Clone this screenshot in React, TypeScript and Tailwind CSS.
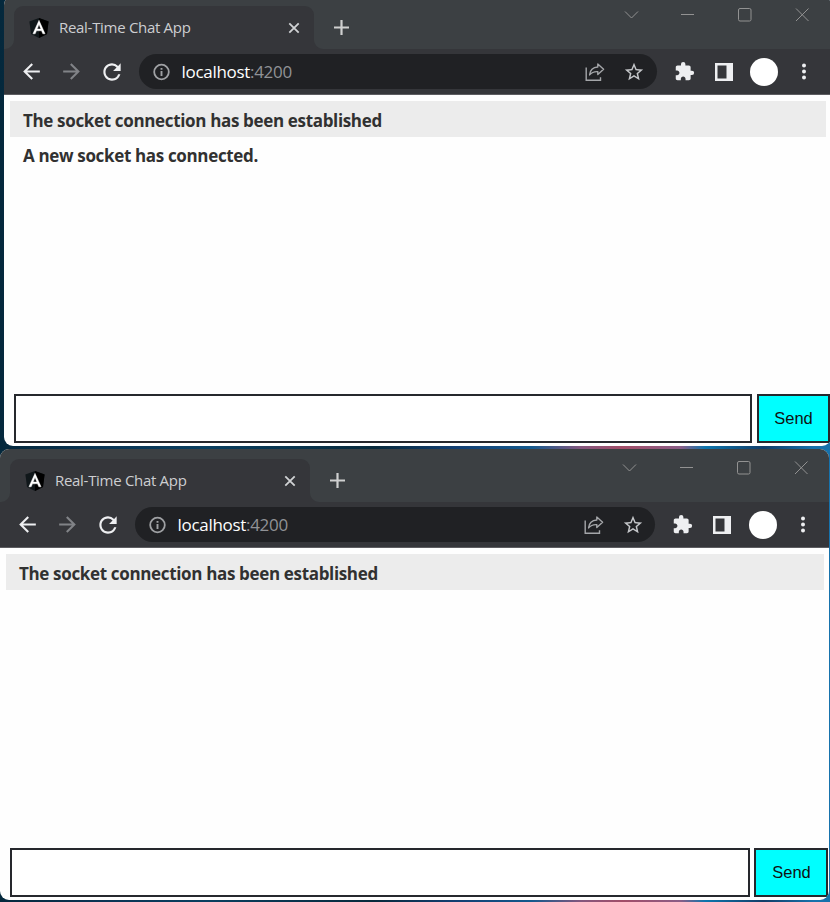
import React from 'react';
import { MdArrowBack, MdArrowForward, MdExtension, MdRefresh, MdStarBorder } from 'react-icons/md';
import clsx from 'clsx';

function AngularLogo() {
  return (
    <svg width="20" height="20" viewBox="0 0 20 20">
      <path d="M10 0 19.6 3.4 18 16 10 20 2 16 .4 3.4Z" fill="#10171a" />
      <path d="M10 0 19.6 3.4 18 16 10 20Z" fill="#000" />
      <path d="M10 2.3 3.9 15.8H6.2L7.5 12.8H12.5L13.8 15.8H16.1ZM10 6.6 11.8 10.9H8.2Z" fill="#fff" stroke="#fff" strokeWidth=".4" fillRule="evenodd" />
    </svg>
  );
}

function InfoIcon() {
  return (
    <svg className="shrink-0" width="20" height="20" viewBox="0 0 20 20" fill="none" stroke="#9fa1a4">
      <circle cx="10.5" cy="10" r="7.3" strokeWidth="1.8" />
      <path d="M10.5 9V14M10.5 6V7.8" strokeWidth="1.9" />
    </svg>
  );
}

function ShareIcon() {
  return (
    <svg className="shrink-0" width="20" height="20" viewBox="0 0 20 20" fill="none" stroke="#a4a6a9" strokeWidth="1.4">
      <path d="M1.2 5.5V18.3H15.5V15.2" />
      <path d="M12.8 2 18.6 7.3 12.8 12.6V9.6C9 9.4 6.5 10.5 4.6 12.9 5 8.7 7.8 5.3 12.8 5Z" strokeLinejoin="round" />
    </svg>
  );
}

function WindowControls({ compact }: { compact: boolean }) {
  return (
    <div className={clsx('ml-auto mt-px flex', compact ? 'pr-[20px]' : 'pr-[21px]')}>
      <svg width="15" height="16" viewBox="0 0 15 16" fill="none" stroke="#929292">
        <path d="M1 4.5 7.5 11 14 4.5" />
      </svg>
      <svg className={compact ? 'ml-[42px]' : 'ml-[41px]'} width="130" height="16" viewBox="0 0 130 16" fill="none" stroke="#929292">
        <path d="M1 7.5H14" />
        <rect x="58.5" y="1.5" width="12.5" height="12.5" rx="1.5" />
        <path d="M116 1.5 128.5 14M128.5 1.5 116 14" />
      </svg>
    </div>
  );
}

function TabStrip({ compact }: { compact: boolean }) {
  return (
    <div className="flex h-[53px] bg-[#3c4043] pl-[10px] pt-[10px]">
      <div className="relative flex h-[43px] w-[300px] items-center rounded-t-[9px] bg-[#35363a] pl-[15px] pr-[14px]">
        <svg className="absolute bottom-0 -left-[9px]" width="9" height="9">
          <path d="M9 0V9H0A9 9 0 0 0 9 0Z" fill="#35363a" />
        </svg>
        <svg className="absolute bottom-0 -right-[9px]" width="9" height="9">
          <path d="M0 0V9H9A9 9 0 0 1 0 0Z" fill="#35363a" />
        </svg>
        <AngularLogo />
        <span className="ml-[10px] flex-1 whitespace-nowrap pb-[2px] text-[15px] leading-5 tracking-[-0.3px] text-[#cdced1]">
          Real-Time Chat App
        </span>
        <svg width="12" height="12" viewBox="0 0 12 12" stroke="#d0d2d4" strokeWidth="1.8">
          <path d="M1.3 1.3 10.7 10.7M10.7 1.3 1.3 10.7" />
        </svg>
      </div>
      <svg className="ml-[19px] mt-[13px]" width="17" height="17" viewBox="0 0 17 17" stroke="#cfd0d0" strokeWidth="2.2">
        <path d="M8.5 1V16M1 8.5H16" />
      </svg>
      <WindowControls compact={compact} />
    </div>
  );
}

function Toolbar({ compact }: { compact: boolean }) {
  return (
    <div className={clsx('flex h-[46px] items-center border-b border-[#5d5d61] bg-[#35363a] pl-[15px]', compact ? 'pr-[24px]' : 'pr-[25px]')}>
      <MdArrowBack className="shrink-0 text-[#eeeff1]" size={25} />
      <MdArrowForward className="ml-[15px] shrink-0 text-[#818387]" size={25} />
      <MdRefresh className="ml-[15px] shrink-0 text-[#eeeff1]" size={26} />
      <div className={clsx('ml-[14px] flex h-[35px] flex-1 items-center rounded-full bg-[#202124] pl-[12px]', compact ? 'pr-[11px]' : 'pr-[12px]')}>
        <InfoIcon />
        <span className="ml-[10.5px] flex-1 whitespace-nowrap text-[17px] leading-6 tracking-[-0.3px] text-[#909296]">
          <span className="text-white">localhost</span>:4200
        </span>
        <ShareIcon />
        <MdStarBorder className="ml-[18px] shrink-0 text-[#c5c7ca]" size={22} />
      </div>
      <MdExtension className="ml-[17px] shrink-0 text-[#eeeff1]" size={21} />
      <svg className="ml-[20px] shrink-0" width="18" height="18" viewBox="0 0 18 18">
        <path d="M0 0H18V18H0ZM2.5 2.5V15.5H11.5V2.5Z" fill="#eeeff1" fillRule="evenodd" />
      </svg>
      <div className={clsx('size-[28px] shrink-0 rounded-full bg-white', compact ? 'ml-[18px]' : 'ml-[17px]')} />
      <svg className="ml-[24px] shrink-0" width="4" height="18" viewBox="0 0 4 18" fill="#eeeff1">
        <circle cx="2" cy="2.5" r="2" />
        <circle cx="2" cy="8.5" r="2" />
        <circle cx="2" cy="14.5" r="2" />
      </svg>
    </div>
  );
}

type ChatWindowProps = {
  messages: string[];
  className: string;
  composerClass: string;
  buttonClass: string;
  compact?: boolean;
};

function ChatWindow({ messages, className, composerClass, buttonClass, compact = false }: ChatWindowProps) {
  return (
    <section className={clsx('flex flex-col overflow-hidden bg-[#fefefe]', className)}>
      <TabStrip compact={compact} />
      <Toolbar compact={compact} />
      <ul className="flex-1 pl-[6px] pr-[5px] pt-[6px]">
        {messages.map((message) => (
          <li
            key={message}
            className="flex h-9 items-center whitespace-nowrap pl-[13px] pt-[3px] text-[17px] font-bold leading-6 tracking-[-0.34px] text-[#313131] odd:bg-[#ececec] even:pt-px"
          >
            {message}
          </li>
        ))}
      </ul>
      <form className={clsx('flex h-[49px] shrink-0 pl-[10px]', composerClass)} onSubmit={(event) => event.preventDefault()}>
        <input className="min-w-0 flex-1 border-2 border-[#26282d] bg-white outline-none" aria-label="Message" />
        <button className={clsx('shrink-0 border-2 border-[#26282d] bg-[#00ffff] font-[Liberation_Sans,Arial,sans-serif] text-[16.5px] text-[#111]', buttonClass)}>
          Send
        </button>
      </form>
    </section>
  );
}

export default function App() {
  return (
    <main className="flex h-[902px] w-[830px] flex-col overflow-hidden bg-[linear-gradient(90deg,#04283c_0%,#0a3454_12%,#093f60_25%,#082a3c_45%,#123f73_55%,#13598d_64%,#84577e_70%,#a24d68_75%,#8a5d87_82%,#0c75ad_85%,#123d68_92%,#1672ac_98%)] font-['Open_Sans',sans-serif]">
      <ChatWindow
        messages={['The socket connection has been established', 'A new socket has connected.']}
        className="-mt-1 ml-1 h-[450px] w-[827px] shrink-0 rounded-[9px]"
        composerClass="mb-[3px] gap-[5px] pr-px"
        buttonClass="w-[73px]"
      />
      <ChatWindow
        compact
        messages={['The socket connection has been established']}
        className="mt-[3px] h-[451px] w-[829px] shrink-0 rounded-[9px]"
        composerClass="mb-[3px] gap-[4px] pr-px"
        buttonClass="w-[74px] pl-px"
      />
    </main>
  );
}
